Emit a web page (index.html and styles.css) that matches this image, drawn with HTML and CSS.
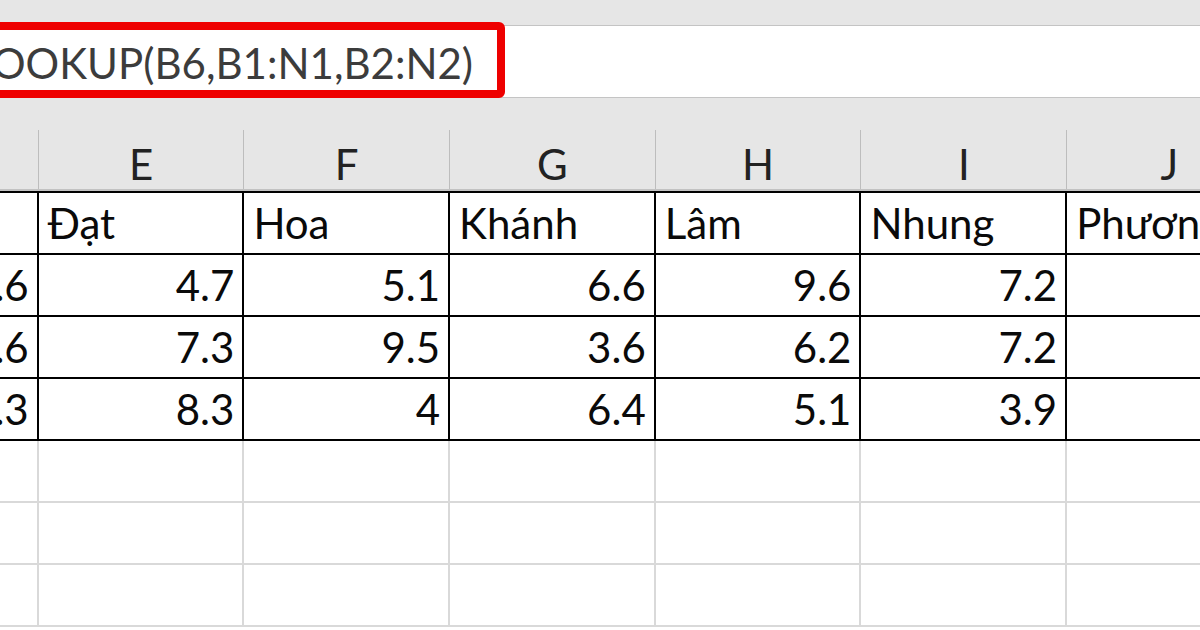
FILE: index.html
```html
<!DOCTYPE html>
<html lang="vi">
<head>
<meta charset="utf-8">
<title>HLOOKUP</title>
<link rel="stylesheet" href="styles.css">
</head>
<body>
<div class="app">
  <div class="topbar"></div>
  <div class="fbar">
    <div class="ftext">OOKUP(B6,B1:N1,B2:N2)</div>
    <div class="hl"></div>
  </div>
  <div class="colhead">
    <div class="hrow">
      <div class="hcell">D</div>
      <div class="hcell">E</div>
      <div class="hcell">F</div>
      <div class="hcell">G</div>
      <div class="hcell">H</div>
      <div class="hcell">I</div>
      <div class="hcell">J</div>
    </div>
  </div>
  <div class="sheet">
    <div class="row data">
      <div class="cell"></div>
      <div class="cell">Đạt</div>
      <div class="cell">Hoa</div>
      <div class="cell">Khánh</div>
      <div class="cell">Lâm</div>
      <div class="cell">Nhung</div>
      <div class="cell">Phương</div>
    </div>
    <div class="row data">
      <div class="cell num">8.6</div>
      <div class="cell num">4.7</div>
      <div class="cell num">5.1</div>
      <div class="cell num">6.6</div>
      <div class="cell num">9.6</div>
      <div class="cell num">7.2</div>
      <div class="cell num">8.1</div>
    </div>
    <div class="row data">
      <div class="cell num">8.6</div>
      <div class="cell num">7.3</div>
      <div class="cell num">9.5</div>
      <div class="cell num">3.6</div>
      <div class="cell num">6.2</div>
      <div class="cell num">7.2</div>
      <div class="cell num">6.5</div>
    </div>
    <div class="row data">
      <div class="cell num">5.3</div>
      <div class="cell num">8.3</div>
      <div class="cell num">4</div>
      <div class="cell num">6.4</div>
      <div class="cell num">5.1</div>
      <div class="cell num">3.9</div>
      <div class="cell num">7.7</div>
    </div>
    <div class="row empty">
      <div class="cell"></div><div class="cell"></div><div class="cell"></div><div class="cell"></div><div class="cell"></div><div class="cell"></div><div class="cell"></div>
    </div>
    <div class="row empty">
      <div class="cell"></div><div class="cell"></div><div class="cell"></div><div class="cell"></div><div class="cell"></div><div class="cell"></div><div class="cell"></div>
    </div>
    <div class="row empty">
      <div class="cell"></div><div class="cell"></div><div class="cell"></div><div class="cell"></div><div class="cell"></div><div class="cell"></div><div class="cell"></div>
    </div>
  </div>
</div>
</body>
</html>
```

FILE: styles.css
```css
* { box-sizing: border-box; }
html, body {
  margin: 0;
  padding: 0;
  width: 1200px;
  height: 630px;
  overflow: hidden;
  background: #ffffff;
}
.app {
  width: 1200px;
  height: 630px;
  overflow: hidden;
  font-family: Lato, "Noto Sans", sans-serif;
}
.topbar {
  height: 26px;
  background: #e6e6e6;
  border-bottom: 1px solid #c4c4c4;
}
.fbar {
  position: relative;
  height: 72px;
  background: #ffffff;
  border-bottom: 1px solid #c4c4c4;
}
.ftext {
  margin-left: -8px;
  padding-top: 12px;
  font-size: 42px;
  line-height: 50px;
  color: #3c3c3c;
  white-space: nowrap;
}
.hl {
  position: absolute;
  left: -20px;
  top: -4px;
  width: 525px;
  height: 76px;
  border: 8px solid #ee0000;
  border-radius: 6px;
}
.colhead {
  background: #e6e6e6;
  padding-top: 32px;
}
.hrow {
  display: flex;
  margin-left: -167px;
  height: 61px;
  border-bottom: 2px solid #c2c2c2;
}
.hcell {
  flex: none;
  width: 205.7px;
  display: flex;
  align-items: flex-end;
  justify-content: center;
  padding-bottom: 0px;
  border-right: 1.5px solid #bdbdbd;
  font-size: 42px;
  line-height: 50px;
  color: #222222;
}
.sheet {
  border-top: 2px solid #000000;
}
.row {
  display: flex;
  margin-left: -167px;
  height: 62px;
}
.cell {
  flex: none;
  width: 205.7px;
  height: 62px;
  display: flex;
  align-items: flex-end;
  padding: 0 8px 5px 9px;
  font-size: 42px;
  line-height: 50px;
  color: #0a0a0a;
  white-space: nowrap;
}
.data .cell {
  border-right: 2px solid #000000;
  border-bottom: 2px solid #000000;
}
.empty .cell {
  border-right: 2px solid #d9d9d9;
  border-bottom: 2px solid #d9d9d9;
}
.num {
  justify-content: flex-end;
}
```
